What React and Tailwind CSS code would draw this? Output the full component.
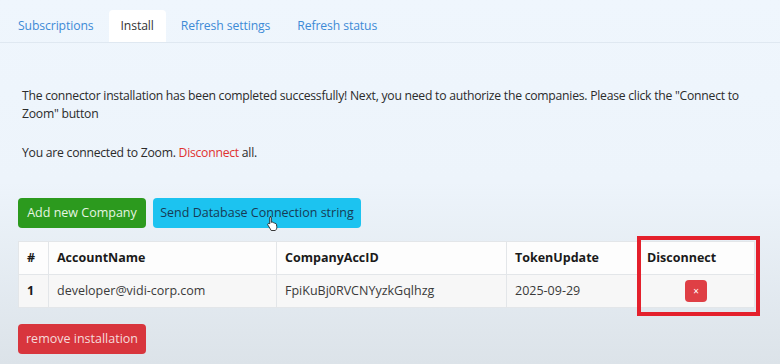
export default function App() {
  const tabs = ["Subscriptions", "Install", "Refresh settings", "Refresh status"];

  return (
    <div
      className="relative w-[780px] h-[364px] overflow-hidden bg-gradient-to-b from-[#eff6fd] via-[#edf4fb] to-[#dce3e9] text-[#2b2b2b]"
      style={{ fontFamily: '"Open Sans", "Noto Sans", sans-serif' }}
    >
      {/* Tabs */}
      <div className="flex gap-[3px] pl-[6px] pt-[10px] border-b border-[#dfe8f1]">
        {tabs.map((t) => (
          <div
            key={t}
            className={
              t === "Install"
                ? "h-[32px] px-[12px] flex items-center text-[12.2px] tracking-[-0.1px] bg-white rounded-t-[4px] text-[#333] -mb-px"
                : "h-[32px] px-[12px] flex items-center text-[12.2px] tracking-[-0.1px] text-[#3d8ad6]"
            }
          >
            {t}
          </div>
        ))}
      </div>

      {/* Messages */}
      <div className="px-[22px] pt-[44px] text-[12.2px] leading-[18px] tracking-[-0.25px]">
        <p>
          The connector installation has been completed successfully! Next, you need to authorize the companies. Please click the "Connect to
          Zoom" button
        </p>
        <p className="mt-[21px]">
          You are connected to Zoom. <span className="text-[#e0322f]">Disconnect</span> all.
        </p>
      </div>

      {/* Buttons */}
      <div className="flex gap-[7px] pl-[18px] mt-[36px]">
        <button className="h-[30px] w-[128px] rounded-[4px] bg-[#2c9a1e] text-[#e6f5e2] text-[12.5px]">
          Add new Company
        </button>
        <button className="relative h-[30px] w-[208px] rounded-[4px] bg-[#1cc3f0] text-[#173b55] text-[12.5px]">
          Send Database Connection string
          <svg className="absolute left-[113px] top-[17px]" width="13" height="16" viewBox="0 0 13 16">
            <path
              d="M4 1.5c.8 0 1.3.6 1.3 1.3v4.6l.4-.2c.7-.3 1.4 0 1.6.6.6-.3 1.300 0 1.6.6.6-.2 1.3.1 1.5.8l.4 2.5c.2 1.6-.4 2.9-1.5 3.8H5.2L2 10.2c-.5-.6-.4-1.4.3-1.7.5-.3 1.1-.1 1.5.3l-.1-5.9c0-.8.5-1.4 1.3-1.4z"
              fill="white"
              stroke="#222"
              strokeWidth="0.9"
            />
          </svg>
        </button>
      </div>

      {/* Table */}
      <div className="pl-[18px] mt-[13px]">
        <table className="border-collapse text-[12.5px] bg-white">
          <thead>
            <tr className="h-[33px] bg-[#fdfdfd]">
              <th className="w-[30px] border border-[#e3e6e9] text-left pl-[8px] font-bold text-[#1a1a1a]">#</th>
              <th className="w-[228px] border border-[#e3e6e9] text-left pl-[8px] font-bold text-[#1a1a1a]">AccountName</th>
              <th className="w-[230px] border border-[#e3e6e9] text-left pl-[8px] font-bold text-[#1a1a1a]">CompanyAccID</th>
              <th className="w-[131px] border border-[#e3e6e9] text-left pl-[8px] font-bold text-[#1a1a1a]">TokenUpdate</th>
              <th className="w-[117px] border border-[#e3e6e9] text-left pl-[9px] font-bold text-[#1a1a1a]">Disconnect</th>
            </tr>
          </thead>
          <tbody>
            <tr className="h-[33px] bg-[#f7f7f7]">
              <td className="border border-[#e3e6e9] pl-[8px] font-bold text-[#1a1a1a]">1</td>
              <td className="border border-[#e3e6e9] pl-[8px] text-[#3a3a3a]">developer@vidi-corp.com</td>
              <td className="border border-[#e3e6e9] pl-[8px] text-[#3a3a3a]">FpiKuBj0RVCNYyzkGqlhzg</td>
              <td className="border border-[#e3e6e9] pl-[8px] text-[#3a3a3a]">2025-09-29</td>
              <td className="border border-[#e3e6e9]">
                <div className="flex justify-center">
                  <button className="w-[22px] h-[22px] rounded-[4px] bg-[#df3f45] text-white text-[10px] leading-none flex items-center justify-center">
                    ×
                  </button>
                </div>
              </td>
            </tr>
          </tbody>
        </table>
      </div>

      {/* Red annotation box */}
      <div className="absolute left-[637px] top-[236px] w-[123px] h-[80px] border-[4px] border-[#e4202c]" />

      {/* Remove installation */}
      <div className="pl-[18px] mt-[16px]">
        <button className="h-[30px] w-[128px] rounded-[4px] bg-[#d8353d] text-[#f6dada] text-[12.5px]">
          remove installation
        </button>
      </div>
    </div>
  );
}
